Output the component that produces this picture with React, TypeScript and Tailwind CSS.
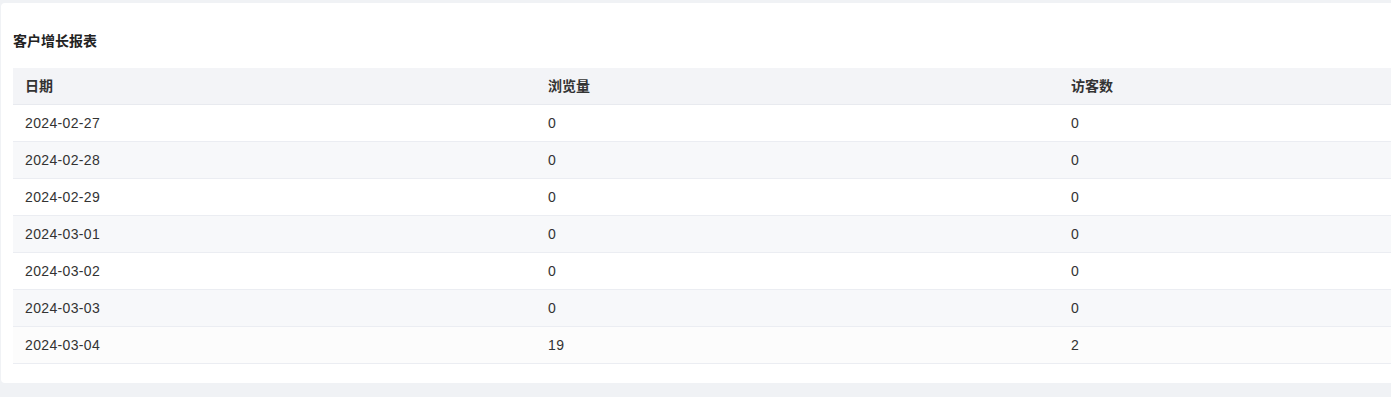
const rows = [
  { date: "2024-02-27", pv: 0, uv: 0 },
  { date: "2024-02-28", pv: 0, uv: 0 },
  { date: "2024-02-29", pv: 0, uv: 0 },
  { date: "2024-03-01", pv: 0, uv: 0 },
  { date: "2024-03-02", pv: 0, uv: 0 },
  { date: "2024-03-03", pv: 0, uv: 0 },
  { date: "2024-03-04", pv: 19, uv: 2 },
];

const rowBg = (i: number) => {
  if (i === rows.length - 1) return "bg-[#fcfcfc]";
  return i % 2 === 1 ? "bg-[#f7f8fa]" : "bg-white";
};

export default function App() {
  return (
    <div
      className="w-[1391px] h-[397px] overflow-hidden bg-[#f0f2f5] pt-[3px] pl-[1px] text-[#333]"
      style={{ fontFamily: '"Liberation Sans", Arial, "Noto Sans CJK SC", sans-serif' }}
    >
      <div className="w-[1600px] bg-white rounded-[4px] px-[12px] pt-[28px] pb-[19px]">
        <div className="h-[20px] leading-[20px] text-[14px] font-bold text-[#222] mb-[17px]">客户增长报表</div>
        <div className="w-[1569px]">
          <div className="grid grid-cols-3 h-[37px] bg-[#f3f4f7] border-b border-[#e8eaef] text-[14px] font-semibold text-[#333]">
            <div className="pl-[12px] flex items-center">日期</div>
            <div className="pl-[12px] flex items-center">浏览量</div>
            <div className="pl-[12px] flex items-center">访客数</div>
          </div>
          {rows.map((r, i) => (
            <div
              key={r.date}
              className={`grid grid-cols-3 h-[37px] border-b border-[#ebedf2] text-[14px] tracking-[0.35px] text-[#333] ${rowBg(i)}`}
            >
              <div className="pl-[12px] flex items-center">{r.date}</div>
              <div className="pl-[12px] flex items-center">{r.pv}</div>
              <div className="pl-[12px] flex items-center">{r.uv}</div>
            </div>
          ))}
        </div>
      </div>
    </div>
  );
}
